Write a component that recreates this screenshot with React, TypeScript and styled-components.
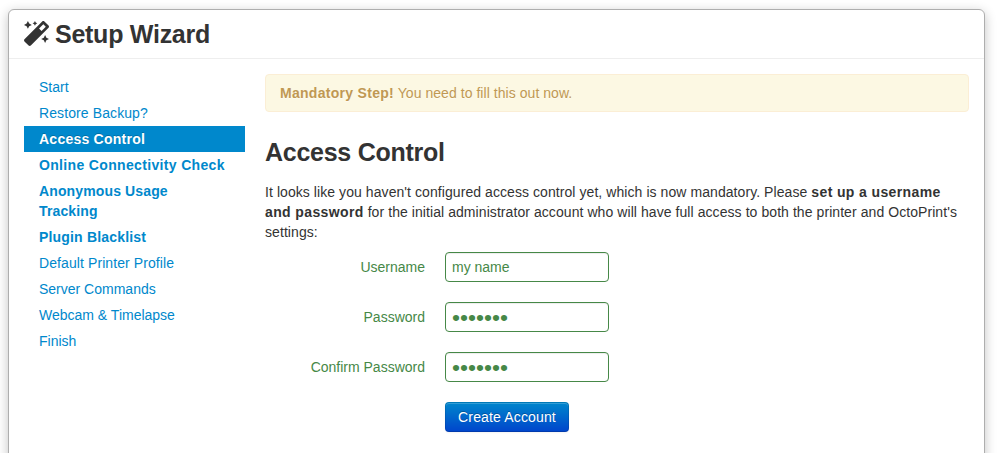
import React from "react";
import styled, { createGlobalStyle } from "styled-components";
import { FaMagic } from "react-icons/fa";

const GlobalStyle = createGlobalStyle`
  * { box-sizing: border-box; }
  html, body { margin: 0; height: 100%; overflow: hidden; background: #fff; }
  body {
    font-family: "Liberation Sans", Arial, sans-serif;
    font-size: 14px;
    line-height: 20px;
    color: #333;
  }
`;

const Page = styled.div`
  height: 453px;
  padding: 9px 13px 0 8px;
  overflow: hidden;
`;

const Modal = styled.div`
  height: 520px;
  background: #fff;
  border: 1px solid #aeaeae;
  border-radius: 6px;
  box-shadow: 0 3px 12px rgba(0, 0, 0, 0.24);
`;

const Header = styled.header`
  display: flex;
  align-items: center;
  gap: 6px;
  height: 49px;
  padding: 0 15px;
  border-bottom: 1px solid #eee;

  svg {
    flex: none;
    width: 25px;
    height: 25px;
    margin-bottom: 1px;
  }
`;

const Title = styled.h3`
  margin: 0;
  font-size: 25px;
  line-height: 30px;
  letter-spacing: -0.26px;
`;

const Body = styled.div`
  display: flex;
  gap: 20px;
  padding: 15px;
`;

const Nav = styled.nav`
  flex: none;
  width: 221px;
`;

const NavLink = styled.a<{ $bold?: boolean; $active?: boolean; $tracking?: number }>`
  display: block;
  padding: 3px 18px 3px 15px;
  text-decoration: none;
  font-weight: ${(p) => (p.$bold ? 700 : 400)};
  letter-spacing: ${(p) => p.$tracking ?? 0}px;
  color: ${(p) => (p.$active ? "#fff" : "#08c")};
  background: ${(p) => (p.$active ? "#08c" : "transparent")};
  text-shadow: ${(p) => (p.$active ? "0 -1px 0 rgba(0, 0, 0, 0.2)" : "none")};
`;

const Content = styled.main`
  flex: 1;
  min-width: 0;
`;

const Strong = styled.strong<{ $tracking: number }>`
  letter-spacing: ${(p) => p.$tracking}px;
`;

const Alert = styled.div`
  padding: 8px 14px;
  margin-bottom: 20px;
  color: #c09853;
  background: #fcf8e3;
  border: 1px solid #fbeed5;
  border-radius: 4px;
  letter-spacing: 0.05px;
  text-shadow: 0 1px 0 rgba(255, 255, 255, 0.5);
`;

const StepTitle = styled.h3`
  margin: 0 0 10px;
  font-size: 25px;
  line-height: 40px;
  letter-spacing: -0.26px;
`;

const Intro = styled.p`
  margin: 0 0 10px;
  letter-spacing: 0.07px;
`;

const Form = styled.form`
  display: grid;
  grid-template-columns: 160px 164px;
  column-gap: 20px;
  row-gap: 20px;
`;

const Label = styled.label`
  padding-top: 5px;
  text-align: right;
  color: #468847;
`;

const Input = styled.input`
  width: 164px;
  height: 30px;
  margin: 0;
  padding: 4px 6px;
  font: inherit;
  color: #468847;
  background: #fff;
  border: 1px solid #468847;
  border-radius: 4px;
  outline: none;
  box-shadow: inset 0 1px 1px rgba(0, 0, 0, 0.075);
`;

const PasswordInput = styled(Input).attrs({ type: "password" })`
  padding: 1px 6px;
  font-size: 22.8px;
  line-height: 26px;
`;

const Button = styled.button`
  grid-column: 2;
  justify-self: start;
  width: 124px;
  height: 30px;
  padding: 4px 0;
  font: inherit;
  letter-spacing: 0.15px;
  color: #fff;
  white-space: nowrap;
  text-shadow: 0 -1px 0 rgba(0, 0, 0, 0.25);
  background: linear-gradient(to bottom, #08c, #04c) border-box;
  border: 1px solid;
  border-color: rgba(0, 0, 0, 0.1) rgba(0, 0, 0, 0.1) rgba(0, 0, 0, 0.15);
  border-radius: 4px;
  box-shadow: inset 0 1px 0 rgba(255, 255, 255, 0.2), 0 1px 2px rgba(0, 0, 0, 0.05);
`;

const steps = [
  { name: "Start" },
  { name: "Restore Backup?", tracking: 0.1 },
  { name: "Access Control", bold: true, active: true, tracking: 0.24 },
  { name: "Online Connectivity Check", bold: true, tracking: 0.34 },
  { name: "Anonymous Usage Tracking", bold: true, tracking: 0.13 },
  { name: "Plugin Blacklist", bold: true, tracking: 0.18 },
  { name: "Default Printer Profile", tracking: 0.09 },
  { name: "Server Commands" },
  { name: "Webcam & Timelapse" },
  { name: "Finish" },
];

export default function App() {
  return (
    <Page>
      <GlobalStyle />
      <Modal>
        <Header>
          <FaMagic />
          <Title>Setup Wizard</Title>
        </Header>
        <Body>
          <Nav>
            {steps.map((s) => (
              <NavLink key={s.name} href="#" $bold={s.bold} $active={s.active} $tracking={s.tracking}>
                {s.name}
              </NavLink>
            ))}
          </Nav>
          <Content>
            <Alert>
              <Strong $tracking={0.29}>Mandatory Step!</Strong> You need to fill this out now.
            </Alert>
            <StepTitle>Access Control</StepTitle>
            <Intro>
              It looks like you haven't configured access control yet, which is now mandatory. Please{" "}
              <Strong $tracking={0.38}>set up a username and password</Strong> for the initial
              administrator account who will have full access to both the printer and OctoPrint's
              settings:
            </Intro>
            <Form>
              <Label htmlFor="username">Username</Label>
              <Input id="username" type="text" defaultValue="my name" />
              <Label htmlFor="password">Password</Label>
              <PasswordInput id="password" defaultValue="octopus" />
              <Label htmlFor="confirm">Confirm Password</Label>
              <PasswordInput id="confirm" defaultValue="octopus" />
              <Button type="button">Create Account</Button>
            </Form>
          </Content>
        </Body>
      </Modal>
    </Page>
  );
}
